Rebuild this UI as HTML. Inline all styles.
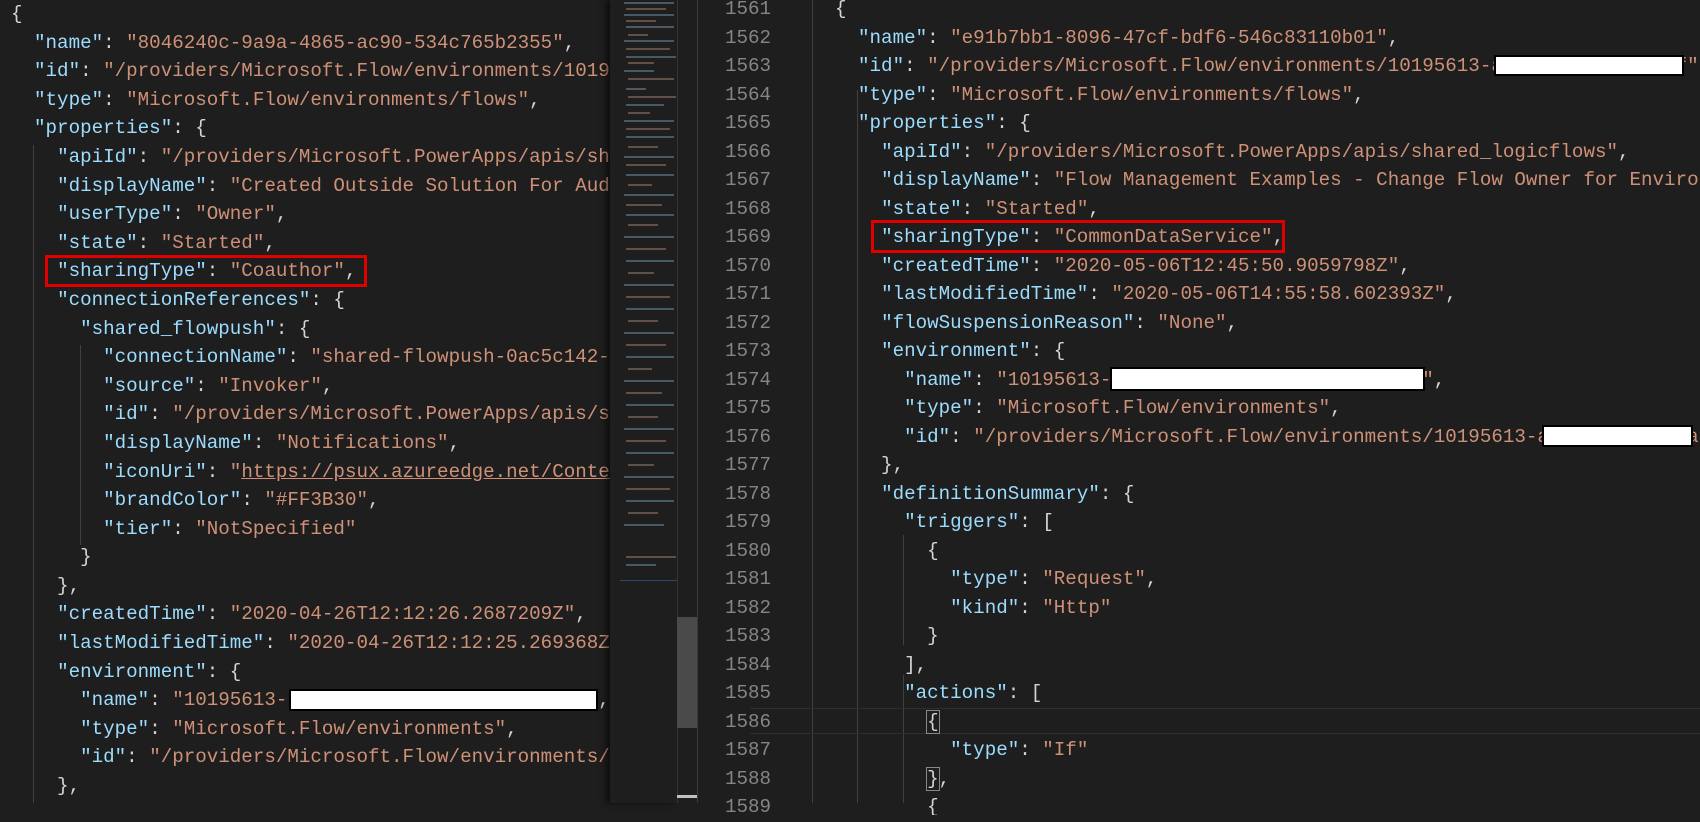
<!DOCTYPE html>
<html><head><meta charset="utf-8">
<style>
html,body{margin:0;padding:0;background:#1e1e1e;width:1700px;height:803px;overflow:hidden}
.code{position:absolute;font-family:"Liberation Mono",monospace;font-size:19.2px;white-space:pre;color:#d4d4d4}
.k{color:#9cdcfe}.s{color:#ce9178}.u{color:#ce9178;text-decoration:underline}
#left{left:11px;top:0px;width:599px;height:803px;overflow:hidden;line-height:28.6px}
#right{left:835px;top:-5px;width:865px;line-height:28.5px;overflow:hidden;height:820px}
#nums{position:absolute;left:700px;top:-5px;width:71px;text-align:right;font-family:"Liberation Mono",monospace;font-size:19.2px;line-height:28.5px;color:#858585;white-space:pre}
.red{position:absolute;border:3px solid #e00000;box-sizing:border-box}
.wb{position:absolute;background:#fff;border:2px solid #000;box-sizing:border-box}
.g{position:absolute;width:1px;background:#404040}
</style></head><body>
<div class="g" style="left:33px;top:145px;height:658px"></div>
<div class="g" style="left:80px;top:345px;height:200px"></div>
<div id="left" class="code">{
  <span class="k">"name"</span>: <span class="s">"8046240c-9a9a-4865-ac90-534c765b2355"</span>,
  <span class="k">"id"</span>: <span class="s">"/providers/Microsoft.Flow/environments/10195613-aaaa"</span>
  <span class="k">"type"</span>: <span class="s">"Microsoft.Flow/environments/flows"</span>,
  <span class="k">"properties"</span>: {
    <span class="k">"apiId"</span>: <span class="s">"/providers/Microsoft.PowerApps/apis/shared_logicflows"</span>,
    <span class="k">"displayName"</span>: <span class="s">"Created Outside Solution For Audit"</span>,
    <span class="k">"userType"</span>: <span class="s">"Owner"</span>,
    <span class="k">"state"</span>: <span class="s">"Started"</span>,
    <span class="k">"sharingType"</span>: <span class="s">"Coauthor"</span>,
    <span class="k">"connectionReferences"</span>: {
      <span class="k">"shared_flowpush"</span>: {
        <span class="k">"connectionName"</span>: <span class="s">"shared-flowpush-0ac5c142-aaaa"</span>,
        <span class="k">"source"</span>: <span class="s">"Invoker"</span>,
        <span class="k">"id"</span>: <span class="s">"/providers/Microsoft.PowerApps/apis/shared_flowpush"</span>,
        <span class="k">"displayName"</span>: <span class="s">"Notifications"</span>,
        <span class="k">"iconUri"</span>: <span class="s">"</span><span class="u">https://psux.azureedge.net/Content/Images</span>
        <span class="k">"brandColor"</span>: <span class="s">"#FF3B30"</span>,
        <span class="k">"tier"</span>: <span class="s">"NotSpecified"</span>
      }
    },
    <span class="k">"createdTime"</span>: <span class="s">"2020-04-26T12:12:26.2687209Z"</span>,
    <span class="k">"lastModifiedTime"</span>: <span class="s">"2020-04-26T12:12:25.269368Z"</span>,
    <span class="k">"environment"</span>: {
      <span class="k">"name"</span>: <span class="s">"10195613-                          "</span>,
      <span class="k">"type"</span>: <span class="s">"Microsoft.Flow/environments"</span>,
      <span class="k">"id"</span>: <span class="s">"/providers/Microsoft.Flow/environments/10195613"</span>
    },
</div>
<div class="red" style="left:45px;top:255px;width:322px;height:32px"></div>
<div class="wb" style="left:289px;top:689px;width:309px;height:22px"></div>

<!-- minimap -->
<div style="position:absolute;left:610px;top:0;width:67px;height:803px;background:#1e1e1e;box-shadow:-4px 0 6px rgba(0,0,0,.6)"></div>
<svg style="position:absolute;left:610px;top:0" width="67" height="803">
<g opacity="0.55">
<rect x="14" y="2" width="50" height="2" fill="#6a8a9a"/><rect x="16" y="8" width="40" height="2" fill="#9a7a6a"/>
<rect x="14" y="14" width="50" height="2" fill="#6a8a9a"/><rect x="16" y="20" width="30" height="2" fill="#9a7a6a"/>
<rect x="16" y="26" width="48" height="2" fill="#7a8a9a"/><rect x="18" y="34" width="20" height="2" fill="#9a7a6a"/>
<rect x="14" y="40" width="50" height="2" fill="#6a8a9a"/><rect x="16" y="48" width="44" height="2" fill="#9a7a6a"/>
<rect x="16" y="56" width="50" height="2" fill="#6a8a9a"/><rect x="18" y="62" width="26" height="2" fill="#9a7a6a"/>
<rect x="14" y="70" width="30" height="2" fill="#6a8a9a"/><rect x="18" y="78" width="46" height="2" fill="#9a7a6a"/>
<rect x="16" y="88" width="20" height="2" fill="#7a8a9a"/><rect x="18" y="96" width="48" height="2" fill="#9a7a6a"/>
<rect x="16" y="104" width="38" height="2" fill="#6a8a9a"/><rect x="18" y="112" width="22" height="2" fill="#9a7a6a"/>
<rect x="14" y="120" width="50" height="2" fill="#6a8a9a"/><rect x="16" y="128" width="44" height="2" fill="#9a7a6a"/>
<rect x="16" y="136" width="48" height="2" fill="#6a8a9a"/><rect x="18" y="146" width="30" height="2" fill="#9a7a6a"/>
<rect x="14" y="156" width="50" height="2" fill="#6a8a9a"/><rect x="16" y="164" width="40" height="2" fill="#9a7a6a"/>
<rect x="16" y="174" width="48" height="2" fill="#6a8a9a"/><rect x="18" y="184" width="24" height="2" fill="#9a7a6a"/>
<rect x="14" y="194" width="50" height="2" fill="#6a8a9a"/><rect x="16" y="204" width="36" height="2" fill="#9a7a6a"/>
<rect x="16" y="214" width="48" height="2" fill="#6a8a9a"/><rect x="18" y="224" width="30" height="2" fill="#9a7a6a"/>
<rect x="14" y="236" width="50" height="2" fill="#6a8a9a"/><rect x="16" y="248" width="40" height="2" fill="#9a7a6a"/>
<rect x="16" y="260" width="48" height="2" fill="#6a8a9a"/><rect x="18" y="272" width="26" height="2" fill="#9a7a6a"/>
<rect x="14" y="284" width="50" height="2" fill="#6a8a9a"/><rect x="16" y="296" width="44" height="2" fill="#9a7a6a"/>
<rect x="16" y="308" width="48" height="2" fill="#6a8a9a"/><rect x="18" y="320" width="30" height="2" fill="#9a7a6a"/>
<rect x="14" y="332" width="50" height="2" fill="#6a8a9a"/><rect x="16" y="344" width="40" height="2" fill="#9a7a6a"/>
<rect x="16" y="356" width="48" height="2" fill="#6a8a9a"/><rect x="18" y="368" width="24" height="2" fill="#9a7a6a"/>
<rect x="14" y="380" width="50" height="2" fill="#6a8a9a"/><rect x="16" y="392" width="36" height="2" fill="#9a7a6a"/>
<rect x="16" y="404" width="48" height="2" fill="#6a8a9a"/><rect x="18" y="416" width="30" height="2" fill="#9a7a6a"/>
<rect x="14" y="428" width="50" height="2" fill="#6a8a9a"/><rect x="16" y="440" width="40" height="2" fill="#9a7a6a"/>
<rect x="16" y="452" width="48" height="2" fill="#6a8a9a"/><rect x="18" y="464" width="26" height="2" fill="#9a7a6a"/>
<rect x="14" y="476" width="50" height="2" fill="#6a8a9a"/><rect x="16" y="488" width="44" height="2" fill="#9a7a6a"/>
<rect x="16" y="500" width="48" height="2" fill="#6a8a9a"/><rect x="18" y="512" width="30" height="2" fill="#9a7a6a"/>
<rect x="14" y="524" width="40" height="2" fill="#6a8a9a"/><rect x="16" y="556" width="50" height="2" fill="#9a7a6a"/>
<rect x="16" y="564" width="30" height="2" fill="#6a8a9a"/>
</g>
<rect x="10" y="580" width="57" height="1" fill="#2c4a6a"/>
</svg>
<div style="position:absolute;left:677px;top:0;width:20px;height:803px;background:#1e1e1e;border-left:1px solid #333"></div>
<div style="position:absolute;left:677px;top:617px;width:20px;height:111px;background:#4a4a4a"></div>
<div style="position:absolute;left:677px;top:795px;width:20px;height:3px;background:#c0c0c0"></div>
<div style="position:absolute;left:697px;top:0;width:1px;height:803px;background:#3a3a3a"></div>

<div id="nums">1561
1562
1563
1564
1565
1566
1567
1568
1569
1570
1571
1572
1573
1574
1575
1576
1577
1578
1579
1580
1581
1582
1583
1584
1585
1586
1587
1588
1589</div>
<div class="g" style="left:812px;top:0;height:803px"></div>
<div class="g" style="left:857px;top:90px;height:713px"></div>
<div class="g" style="left:903px;top:535px;height:110px"></div>
<div class="g" style="left:903px;top:675px;height:128px"></div>
<div style="position:absolute;left:750px;top:708px;width:950px;height:26px;border-top:1px solid #2e2e2e;border-bottom:1px solid #2e2e2e;box-sizing:border-box"></div>
<div id="right" class="code">{
  <span class="k">"name"</span>: <span class="s">"e91b7bb1-8096-47cf-bdf6-546c83110b01"</span>,
  <span class="k">"id"</span>: <span class="s">"/providers/Microsoft.Flow/environments/10195613-aaaaaaaaaaaaaaaaf"</span>
  <span class="k">"type"</span>: <span class="s">"Microsoft.Flow/environments/flows"</span>,
  <span class="k">"properties"</span>: {
    <span class="k">"apiId"</span>: <span class="s">"/providers/Microsoft.PowerApps/apis/shared_logicflows"</span>,
    <span class="k">"displayName"</span>: <span class="s">"Flow Management Examples - Change Flow Owner for Environment"</span>
    <span class="k">"state"</span>: <span class="s">"Started"</span>,
    <span class="k">"sharingType"</span>: <span class="s">"CommonDataService"</span>,
    <span class="k">"createdTime"</span>: <span class="s">"2020-05-06T12:45:50.9059798Z"</span>,
    <span class="k">"lastModifiedTime"</span>: <span class="s">"2020-05-06T14:55:58.602393Z"</span>,
    <span class="k">"flowSuspensionReason"</span>: <span class="s">"None"</span>,
    <span class="k">"environment"</span>: {
      <span class="k">"name"</span>: <span class="s">"10195613-                           "</span>,
      <span class="k">"type"</span>: <span class="s">"Microsoft.Flow/environments"</span>,
      <span class="k">"id"</span>: <span class="s">"/providers/Microsoft.Flow/environments/10195613-aaaaaaaaaaaaaaa"</span>
    },
    <span class="k">"definitionSummary"</span>: {
      <span class="k">"triggers"</span>: [
        {
          <span class="k">"type"</span>: <span class="s">"Request"</span>,
          <span class="k">"kind"</span>: <span class="s">"Http"</span>
        }
      ],
      <span class="k">"actions"</span>: [
        <span style="outline:1px solid #888">{</span>
          <span class="k">"type"</span>: <span class="s">"If"</span>
        <span style="outline:1px solid #888">}</span>,
        {
</div>
<div class="red" style="left:871px;top:220px;width:414px;height:33px"></div>
<div class="wb" style="left:1494px;top:55px;width:190px;height:21px"></div>
<div class="wb" style="left:1110px;top:367px;width:315px;height:24px"></div>
<div class="wb" style="left:1542px;top:425px;width:151px;height:22px"></div>
</body></html>
